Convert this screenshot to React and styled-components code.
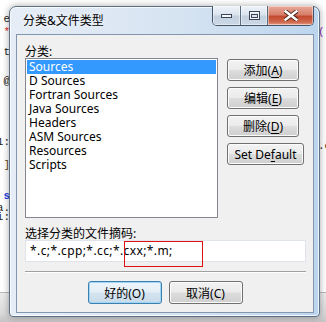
import React from 'react';
import styled, { createGlobalStyle } from 'styled-components';

const Global = createGlobalStyle`
  html, body {
    margin: 0;
    padding: 0;
    background: #ffffff;
  }
  body {
    font-family: "Noto Sans", "Noto Sans CJK SC", sans-serif;
    font-size: 12px;
  }
`

const Desktop = styled.div`
  position: relative;
  width: 326px;
  height: 322px;
  overflow: hidden;
  display: flex;
  flex-direction: column;
  background: #ffffff;
`

const Editor = styled.div`
  flex: 1;
  display: flex;
  justify-content: space-between;
`

const CodeColumn = styled.div`
  width: ${p => p.$width}px;
  display: flex;
  flex-direction: column;
  align-items: ${p => (p.$right ? 'flex-end' : 'flex-start')};
  overflow: hidden;
  font-family: "Liberation Mono", monospace;
  font-size: 11px;
`

const CodeLine = styled.div`
  margin-top: ${p => p.$top}px;
  height: 9px;
  line-height: 9px;
  white-space: nowrap;
  color: ${p => p.$color || '#222'};
  font-weight: ${p => (p.$bold ? 700 : 400)};
`

const BottomBar = styled.div`
  height: 29px;
  border-top: 1px solid #b8b8b8;
  background: linear-gradient(#ececec, #dadada 70%, #c4c4c4);
`

const Window = styled.div`
  position: absolute;
  left: 9px;
  top: 6px;
  width: 311px;
  height: 311px;
  box-sizing: border-box;
  border: 1px solid #5c7088;
  border-radius: 7px 7px 4px 4px;
  background: linear-gradient(90deg, #e6edf6 0%, #d6e3f1 55%, #bcd5ee 100%);
  box-shadow: 0 0 7px rgba(0, 0, 0, 0.35), inset 0 0 0 1px rgba(255, 255, 255, 0.75);
  display: flex;
  flex-direction: column;
  padding: 0 5px 3px 6px;
`

const TitleBar = styled.div`
  height: 27px;
  display: flex;
  justify-content: space-between;
  align-items: flex-start;
`

const Title = styled.div`
  margin-top: 7px;
  padding-left: 7px;
  line-height: 14px;
  font-size: 12px;
  color: #000;
  text-shadow: 0 0 6px rgba(255, 255, 255, 0.95);
`

const Caption = styled.div`
  display: flex;
  margin-top: -1px;
  border: 1px solid #44546a;
  border-top: none;
  border-radius: 0 0 5px 5px;
  overflow: hidden;
  height: 19px;
`

const CaptionButton = styled.div`
  width: ${p => p.$width}px;
  display: flex;
  align-items: center;
  justify-content: center;
  border-left: ${p => (p.$first ? 'none' : '1px solid #5a6a80')};
  background: ${p => (p.$close
    ? 'linear-gradient(#e9a99a 0%, #d7806c 45%, #c4492f 55%, #d06a4f 85%, #e6a08a 100%)'
    : 'linear-gradient(#eef3f9 0%, #dbe4ee 45%, #c3d0de 55%, #ccd8e6 100%)')};
  box-shadow: inset 0 0 0 1px rgba(255, 255, 255, 0.45);
`

const Client = styled.div`
  flex: 1;
  border: 1px solid #8396ad;
  background: #f0f0f0;
  padding: 10px 7px 8px 8px;
  display: flex;
  flex-direction: column;
`

const Label = styled.div`
  height: 13px;
  line-height: 13px;
  font-size: 12px;
  color: #000;
  margin-top: ${p => p.$top || 0}px;
`

const TopRow = styled.div`
  display: flex;
  gap: 9px;
  align-items: flex-start;
`

const ListBox = styled.div`
  width: 193px;
  height: 160px;
  box-sizing: border-box;
  border: 1px solid #828790;
  background: #fff;
  padding: 1px;
`

const ListItem = styled.div`
  height: 14px;
  line-height: 14px;
  padding-left: 2px;
  font-size: 12px;
  color: ${p => (p.$selected ? '#fff' : '#000')};
  background: ${p => (p.$selected ? '#3399ff' : 'transparent')};
`

const ButtonColumn = styled.div`
  display: flex;
  flex-direction: column;
  gap: 6px;
  margin-top: 1px;
  align-items: flex-start;
`

const Button = styled.div`
  width: ${p => p.$width}px;
  height: ${p => p.$height || 23}px;
  box-sizing: border-box;
  border: 1px solid ${p => (p.$default ? '#3c7fb1' : '#707070')};
  border-radius: 3px;
  display: flex;
  align-items: center;
  justify-content: center;
  font-size: 12px;
  color: #000;
  background: ${p => (p.$default
    ? 'linear-gradient(#eef5fa 0%, #e4eef6 48%, #d4e3ef 52%, #c8dbea 100%)'
    : 'linear-gradient(#f2f2f2 0%, #ebebeb 48%, #dddddd 52%, #cfcfcf 100%)')};
  box-shadow: ${p => (p.$default
    ? 'inset 0 0 0 1px #9fd6f3'
    : 'inset 0 0 0 1px #fcfcfc')};
`

const Key = styled.span`
  text-decoration: underline;
  text-underline-offset: 2px;
`

const FieldWrap = styled.div`
  position: relative;
`

const TextField = styled.div`
  width: 281px;
  height: 22px;
  box-sizing: border-box;
  border: 1px solid #dfe4ea;
  background: #fff;
  padding-left: 4px;
  line-height: 20px;
  font-size: 12px;
  letter-spacing: 0.4px;
  color: #000;
  white-space: nowrap;
`

const Annotation = styled.div`
  position: absolute;
  left: 99px;
  top: 1px;
  width: 79px;
  height: 26px;
  box-sizing: border-box;
  border: 1px solid #e01010;
`

const Separator = styled.div`
  margin-top: 9px;
  width: 281px;
  height: 1px;
  background: #a0a0a0;
  box-shadow: 0 1px 0 #ffffff;
`

const ButtonRow = styled.div`
  margin-top: 9px;
  display: flex;
  justify-content: center;
  gap: 7px;
  padding-right: 1px;
`

const categories = [
  'Sources',
  'D Sources',
  'Fortran Sources',
  'Java Sources',
  'Headers',
  'ASM Sources',
  'Resources',
  'Scripts',
]

const leftCode = [
  { t: 'e', top: 15 },
  { t: '*', top: 4, color: '#e02020' },
  { t: 't', top: 11 },
  { t: '@', top: 20 },
  { t: '1:', top: 52 },
  { t: ']', top: 14, color: '#6a4a20' },
  { t: 's', top: 22, color: '#1a3ce0', bold: true },
  { t: 'a.', top: 3 },
  { t: 'i:', top: 0 },
]

const Label2 = ({ text, k }) => (
  <span>{text}(<Key>{k}</Key>)</span>
)

export default function App() {
  return (
    <>
      <Global />
      <Desktop>
        <Editor>
          <CodeColumn $width={10} $right>
            {leftCode.map((l, i) => (
              <CodeLine key={i} $top={l.top} $color={l.color} $bold={l.bold}>{l.t}</CodeLine>
            ))}
          </CodeColumn>
          <CodeColumn $width={8}>
            <CodeLine $top={28} $color="#8a2ab0">(</CodeLine>
            <CodeLine $top={105}>.e</CodeLine>
          </CodeColumn>
        </Editor>
        <BottomBar />

        <Window>
          <TitleBar>
            <Title>分类&amp;文件类型</Title>
            <Caption>
              <CaptionButton $width={27} $first>
                <svg width="11" height="5" viewBox="0 0 11 5">
                  <rect x="0.5" y="1.5" width="10" height="3" fill="#f4f6f9" stroke="#3a475a" />
                </svg>
              </CaptionButton>
              <CaptionButton $width={26}>
                <svg width="11" height="9" viewBox="0 0 11 9">
                  <rect x="0.5" y="0.5" width="10" height="8" fill="none" stroke="#3a475a" />
                  <rect x="1.5" y="1.5" width="8" height="6" fill="none" stroke="#f4f6f9" />
                  <rect x="2.5" y="3.5" width="6" height="3" fill="#dfe6ef" stroke="#3a475a" />
                </svg>
              </CaptionButton>
              <CaptionButton $width={45} $close>
                <svg width="14" height="11" viewBox="0 0 14 11">
                  <path d="M1 1 L13 10 M13 1 L1 10" stroke="#4a2018" strokeWidth="4.2" strokeLinecap="square" />
                  <path d="M1.5 1.3 L12.5 9.7 M12.5 1.3 L1.5 9.7" stroke="#ffffff" strokeWidth="2.4" strokeLinecap="square" />
                </svg>
              </CaptionButton>
            </Caption>
          </TitleBar>

          <Client>
            <Label>分类:</Label>
            <TopRow>
              <ListBox>
                {categories.map((c, i) => (
                  <ListItem key={c} $selected={i === 0}>{c}</ListItem>
                ))}
              </ListBox>
              <ButtonColumn>
                <Button $width={72} $height={22}><Label2 text="添加" k="A" /></Button>
                <Button $width={72} $height={22}><Label2 text="编辑" k="E" /></Button>
                <Button $width={72} $height={22}><Label2 text="删除" k="D" /></Button>
                <Button $width={77} $height={22}><span>Set De<Key>f</Key>ault</span></Button>
              </ButtonColumn>
            </TopRow>

            <Label $top={9}>选择分类的文件摘码:</Label>
            <FieldWrap>
              <TextField>*.c;*.cpp;*.cc;*.cxx;*.m;</TextField>
              <Annotation />
            </FieldWrap>

            <Separator />

            <ButtonRow>
              <Button $width={74} $default>好的(O)</Button>
              <Button $width={74}>取消(C)</Button>
            </ButtonRow>
          </Client>
        </Window>
      </Desktop>
    </>
  );
}
